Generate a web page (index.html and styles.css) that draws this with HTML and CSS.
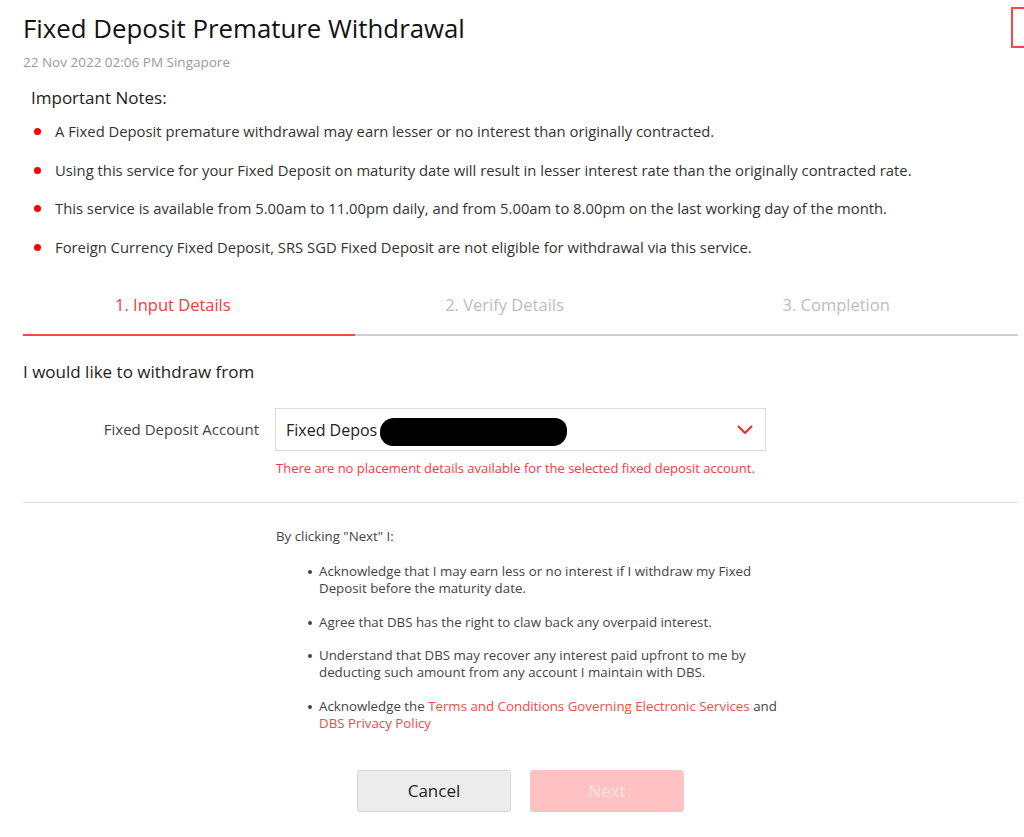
FILE: index.html
```html
<!DOCTYPE html>
<html lang="en">
<head>
<meta charset="utf-8">
<title>Fixed Deposit Premature Withdrawal</title>
<link rel="stylesheet" href="styles.css">
</head>
<body>
<div class="page">
  <div class="corner-box"></div>
  <header class="header">
    <h1 class="title">Fixed Deposit Premature Withdrawal</h1>
    <div class="timestamp">22 Nov 2022 02:06 PM Singapore</div>
  </header>

  <section class="notes">
    <h2 class="notes-title">Important Notes:</h2>
    <ul class="notes-list">
      <li>A Fixed Deposit premature withdrawal may earn lesser or no interest than originally contracted.</li>
      <li>Using this service for your Fixed Deposit on maturity date will result in lesser interest rate than the originally contracted rate.</li>
      <li>This service is available from 5.00am to 11.00pm daily, and from 5.00am to 8.00pm on the last working day of the month.</li>
      <li>Foreign Currency Fixed Deposit, SRS SGD Fixed Deposit are not eligible for withdrawal via this service.</li>
    </ul>
  </section>

  <nav class="steps">
    <div class="step active">1. Input Details</div>
    <div class="step">2. Verify Details</div>
    <div class="step">3. Completion</div>
  </nav>

  <section class="form">
    <h3 class="form-title">I would like to withdraw from</h3>
    <div class="form-row">
      <label class="field-label">Fixed Deposit Account</label>
      <div class="field">
        <div class="select">
          <span class="select-text">Fixed Depos</span>
          <span class="redact"></span>
          <svg class="chevron" width="16" height="10" viewBox="0 0 16 10"><path d="M1.5 1.5 L8 8 L14.5 1.5" fill="none" stroke="#f02828" stroke-width="2" stroke-linecap="round" stroke-linejoin="round"/></svg>
        </div>
        <div class="error">There are no placement details available for the selected fixed deposit account.</div>
      </div>
    </div>
  </section>

  <hr class="divider">

  <section class="consent">
    <p class="consent-intro">By clicking "Next" I:</p>
    <ul class="consent-list">
      <li>Acknowledge that I may earn less or no interest if I withdraw my Fixed Deposit before the maturity date.</li>
      <li>Agree that DBS has the right to claw back any overpaid interest.</li>
      <li>Understand that DBS may recover any interest paid upfront to me by deducting such amount from any account I maintain with DBS.</li>
      <li>Acknowledge the <a class="link" href="#">Terms and Conditions Governing Electronic Services</a> and <a class="link" href="#">DBS Privacy Policy</a></li>
    </ul>
  </section>

  <div class="actions">
    <button class="btn btn-cancel">Cancel</button>
    <button class="btn btn-next">Next</button>
  </div>
</div>
</body>
</html>
```

FILE: styles.css
```css
* { box-sizing: border-box; }
html, body { margin: 0; padding: 0; background: #fff; }
body {
  font-family: "Open Sans", "Noto Sans", sans-serif;
  color: #222;
  overflow: hidden;
}
.page {
  position: relative;
  padding: 0 6px 0 23px;
}
.corner-box {
  position: absolute;
  left: 1011px;
  top: 7px;
  width: 40px;
  height: 41px;
  border: 2px solid #f04a4a;
}
.header { padding-top: 11px; }
.title {
  margin: 0;
  font-size: 25.8px;
  font-weight: 400;
  line-height: 34px;
  color: #111;
}
.timestamp {
  font-size: 13.5px;
  color: #9a9a9a;
  line-height: 18px;
  margin-top: 8px;
}
.notes { padding-left: 8px; margin-top: 16px; }
.notes-title {
  margin: 0;
  font-size: 17px;
  font-weight: 400;
  line-height: 22px;
  color: #222;
}
.notes-list {
  list-style: none;
  margin: 12px 0 0;
  padding: 0;
}
.notes-list li {
  position: relative;
  padding-left: 24px;
  font-size: 14.8px;
  line-height: 20px;
  color: #333;
  margin-bottom: 18.7px;
}
.notes-list li::before {
  content: "";
  position: absolute;
  left: 3px;
  top: 7px;
  width: 7px;
  height: 7px;
  border-radius: 50%;
  background: #f00;
}
.steps {
  display: flex;
  margin-top: 36px;
  border-bottom: 2px solid #d0d0d0;
}
.step {
  flex: 1;
  text-align: center;
  padding: 0 32px 17px 0;
  font-size: 16.5px;
  line-height: 24px;
  color: #bdbdbd;
  margin-bottom: -2px;
  border-bottom: 2px solid transparent;
}
.step.active {
  color: #f33c3c;
  border-bottom-color: #f54848;
}
.form { margin-top: 25px; }
.form-title {
  margin: 0;
  font-size: 17px;
  font-weight: 400;
  line-height: 22px;
  color: #222;
}
.form-row {
  display: flex;
  gap: 16px;
  margin-top: 25px;
}
.field-label {
  width: 236px;
  text-align: right;
  font-size: 15px;
  color: #444;
  line-height: 42px;
}
.field { width: 491px; }
.select {
  position: relative;
  display: flex;
  align-items: center;
  height: 43px;
  border: 1px solid #dcdcdc;
  padding: 0 12px 0 10px;
}
.select-text { font-size: 16px; color: #222; }
.redact {
  position: absolute;
  left: 104px;
  top: 9px;
  width: 187px;
  height: 28px;
  background: #000;
  border-radius: 14px 12px 14px 13px;
}
.chevron { margin-left: auto; }
.error {
  font-size: 13px;
  line-height: 18px;
  color: #f03c3c;
  margin-top: 8px;
  padding-left: 1px;
}
.divider {
  margin: 25px 0 0;
  border: 0;
  border-top: 1px solid #dedede;
}
.consent { margin-left: 253px; margin-top: 25px; width: 520px; }
.consent-intro {
  margin: 0;
  font-size: 13.3px;
  line-height: 17px;
  color: #444;
}
.consent-list {
  list-style: none;
  margin: 18px 0 0;
  padding: 0 0 0 43px;
}
.consent-list li {
  position: relative;
  font-size: 13.3px;
  line-height: 17px;
  color: #444;
  margin-bottom: 16.5px;
  width: 464px;
}
.consent-list li::before {
  content: "";
  position: absolute;
  left: -11px;
  top: 7px;
  width: 4px;
  height: 4px;
  border-radius: 50%;
  background: #444;
}
.link { color: #f24a4a; text-decoration: none; }
.actions {
  display: flex;
  justify-content: center;
  gap: 19px;
  margin-top: 38px;
}
.btn {
  width: 154px;
  height: 42px;
  border-radius: 3px;
  font-family: inherit;
  font-size: 17px;
}
.btn-cancel {
  background: #ececec;
  border: 1px solid #d6d6d6;
  color: #222;
}
.btn-next {
  background: #ffc1c1;
  border: 1px solid #ffc1c1;
  color: #f5e3e3;
}
```
